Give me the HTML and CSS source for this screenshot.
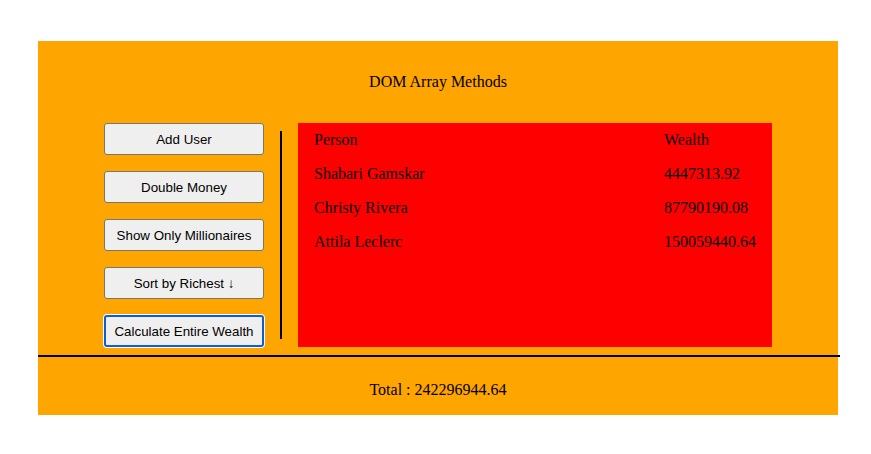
FILE: index.html
```html
<!DOCTYPE html>
<html>
<head>
<meta charset="utf-8">
<link rel="stylesheet" href="styles.css">
</head>
<body>
<div class="app">
  <h1 class="title">DOM Array Methods</h1>
  <div class="main">
    <aside class="controls">
      <button class="btn">Add User</button>
      <button class="btn">Double Money</button>
      <button class="btn">Show Only Millionaires</button>
      <button class="btn">Sort by Richest ↓</button>
      <button class="btn btn-focus">Calculate Entire Wealth</button>
    </aside>
    <div class="divider"></div>
    <div class="table">
      <div class="cell">Person</div><div class="cell">Wealth</div>
      <div class="cell">Shabari Gamskar</div><div class="cell">4447313.92</div>
      <div class="cell">Christy Rivera</div><div class="cell">87790190.08</div>
      <div class="cell">Attila Leclerc</div><div class="cell">150059440.64</div>
    </div>
  </div>
  <div class="rule"></div>
  <div class="total">Total : 242296944.64</div>
</div>
</body>
</html>
```
FILE: styles.css
```css
html, body {
  margin: 0;
  padding: 0;
  background: #fff;
}
body {
  padding: 41px 0 0 38px;
  font-family: "Liberation Serif", "Times New Roman", serif;
  font-size: 16px;
  color: #000;
}
.app {
  width: 800px;
  height: 374px;
  background: #ffa500;
  display: flex;
  flex-direction: column;
}
.title {
  margin: 32px 0 0;
  font-size: 16px;
  font-weight: normal;
  line-height: 18px;
  text-align: center;
}
.main {
  margin-top: 32px;
  padding: 0 66px;
  display: flex;
  align-items: stretch;
  height: 224px;
}
.controls {
  width: 160px;
  display: flex;
  flex-direction: column;
  gap: 16px;
}
.btn {
  height: 32px;
  margin: 0;
  padding: 0 6px;
  background: #efefef;
  border: 1px solid #767676;
  border-radius: 3px;
  font-family: "Liberation Sans", Arial, sans-serif;
  font-size: 13.33px;
  color: #000;
}
.btn-focus {
  border: 2px solid #0b60d6;
  box-shadow: 0 0 0 1px #f6f6f6;
}
.divider {
  width: 2px;
  margin: 8px 16px;
  background: #000;
}
.table {
  flex: 1;
  background: #f00;
  padding: 1px 16px 0;
  display: grid;
  grid-template-columns: 350px 1fr;
  grid-auto-rows: 34px;
  align-content: start;
}
.cell {
  line-height: 32px;
  white-space: nowrap;
}
.rule {
  margin-top: 8px;
  width: 802px;
  height: 2px;
  background: #000;
}
.total {
  flex: 1;
  display: flex;
  align-items: center;
  justify-content: center;
  padding-top: 8px;
}
```
